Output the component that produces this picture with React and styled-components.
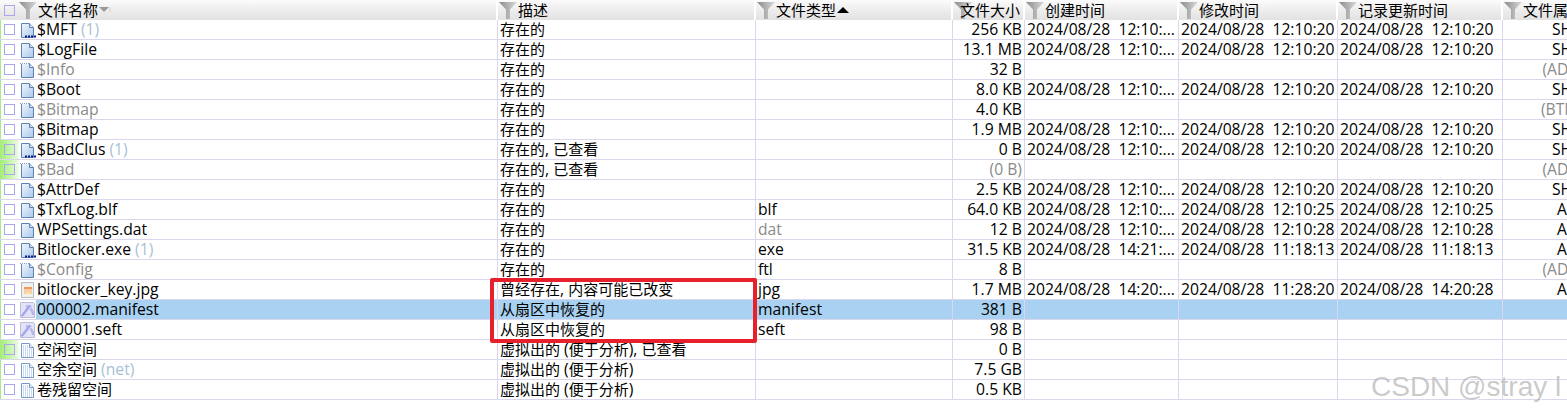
import React from 'react';
import styled, { createGlobalStyle } from 'styled-components';

const COLUMNS = '498px 258px 197px 72px 154px 159px 165px 118px';
const LINE = '#d9d6ee';
const FONT = `"Open Sans", "Noto Sans CJK SC", sans-serif`;

const GlobalStyle = createGlobalStyle`
  html, body {
    margin: 0;
    background: #fff;
    overflow: hidden;
  }
`;

const Page = styled.div`
  position: relative;
  width: 1567px;
  height: 415px;
  overflow: hidden;
  font-family: ${FONT};
  font-size: 15.7px;
  color: #000;
`;

const Table = styled.div`
  width: 1621px;
`;

const HeaderRow = styled.div`
  display: grid;
  grid-template-columns: ${COLUMNS};
  height: 20px;
`;

const HeaderCell = styled.div`
  display: flex;
  align-items: center;
  gap: 1px;
  height: 20px;
  padding-left: ${(p) => p.$inset ?? 1}px;
  box-sizing: border-box;
  border-right: 2px solid #fff;
  background: linear-gradient(#fbfbfb, #ececec 55%, #e2e2e2);
  white-space: nowrap;
`;

const HeaderLabel = styled.span`
  margin-left: ${(p) => (p.$overlap ? -13 : 0)}px;
`;

const Row = styled.div`
  display: grid;
  grid-template-columns: ${COLUMNS};
  height: 20px;
  box-sizing: border-box;
  border-bottom: 1px solid ${LINE};
`;

const Cell = styled.div`
  height: 19px;
  line-height: 19px;
  box-sizing: border-box;
  padding: 0 ${(p) => (p.$align === 'right' ? 2 : 1)}px 0 2px;
  border-right: 1px solid ${LINE};
  text-align: ${(p) => p.$align || 'left'};
  white-space: pre;
  color: ${(p) => (p.$grey ? '#8a8a8a' : '#000')};
  background: ${(p) => (p.$selected ? '#a8d1f2' : 'transparent')};
`;

const NameCell = styled.div`
  display: flex;
  align-items: center;
  height: 19px;
  border-right: 1px solid ${LINE};
`;

const Marker = styled.div`
  flex: none;
  display: flex;
  align-items: center;
  width: 20px;
  height: 19px;
  padding-left: 3px;
  box-sizing: border-box;
  border-left: 1px solid #a5ee7e;
  background: ${(p) =>
    p.$viewed ? 'linear-gradient(90deg, #a4ee7c, #e6fad9 85%, #fff)' : 'transparent'};
`;

const Check = styled.span`
  display: block;
  flex: none;
  width: 11px;
  height: 11px;
  margin-right: ${(p) => (p.$header ? 3 : 0)}px;
  box-sizing: border-box;
  border: 1px solid #aba6ee;
  background: ${(p) => (p.$viewed || p.$header ? 'transparent' : '#fff')};
`;

const IconSlot = styled.div`
  flex: none;
  display: flex;
  width: 16px;
  height: 16px;
`;

const Name = styled.div`
  flex: 1;
  height: 19px;
  line-height: 19px;
  padding-left: 1px;
  white-space: nowrap;
  color: ${(p) => (p.$grey ? '#8a8a8a' : '#000')};
  background: ${(p) => (p.$selected ? '#a8d1f2' : 'transparent')};
`;

const Count = styled.span`
  color: #a9bfd6;
`;

const Han = styled.span`
  font-size: 15px;
`;

const HighlightBox = styled.div`
  position: absolute;
  left: 490px;
  top: 278px;
  width: 267px;
  height: 65px;
  box-sizing: border-box;
  border: 4px solid #e8202c;
  border-radius: 2px;
  pointer-events: none;
`;

const Watermark = styled.div`
  position: absolute;
  left: 1371px;
  top: 371px;
  font-family: "Liberation Sans", sans-serif;
  font-size: 28px;
  line-height: 32px;
  white-space: nowrap;
  color: rgba(150, 150, 150, 0.5);
  text-shadow: 1px 1px 1px rgba(255, 255, 255, 0.8);
`;

// CJK runs sit a little smaller than the latin text around them
const Text = ({ children }) =>
  String(children)
    .split(/([\u4e00-\u9fff]+)/)
    .map((part, i) => (i % 2 ? <Han key={i}>{part}</Han> : part));

const FilterIcon = () => (
  <svg width="18" height="19" viewBox="0 0 18 19">
    <defs>
      <linearGradient id="funnel" x1="0" y1="0" x2="1" y2="0">
        <stop offset="0" stopColor="#8a8a8a" />
        <stop offset="1" stopColor="#dadada" />
      </linearGradient>
    </defs>
    <path d="M0 1h18l-7 7.5V18H7V8.5z" fill="url(#funnel)" />
  </svg>
);

const SortDown = () => (
  <svg width="12" height="8" viewBox="0 0 12 8">
    <path d="M0 1h10L5 6z" fill="#9a9a9a" />
    <path d="M11 1v5" stroke="#cfcfcf" />
  </svg>
);

const SortUp = () => (
  <svg width="12" height="8" viewBox="0 0 12 8">
    <path d="M0 7L6 1l6 6z" fill="#000" />
  </svg>
);

const FileShape = ({ id }) => (
  <>
    <defs>
      <linearGradient id={id} x1="0" y1="0" x2="1" y2="1">
        <stop offset="0" stopColor="#f2f7fd" />
        <stop offset="1" stopColor="#a9c8ec" />
      </linearGradient>
    </defs>
    <path d="M1.5 1.5h8l4 4v10h-12z" fill={`url(#${id})`} stroke="#5f82b0" />
    <path d="M9.5 1.5v4h4" fill="#cfe0f4" stroke="#5f82b0" />
  </>
);

const FileIcon = ({ kind }) => {
  if (kind === 'jpg') {
    return (
      <svg width="16" height="16" viewBox="0 0 16 16">
        <path d="M1.5 .5h12v15h-12z" fill="#f3f0ec" stroke="#b4bccb" />
        <rect x="4" y="5" width="8" height="7" fill="#f8cda8" />
        <path d="M4 5h8v2H4z" fill="#ee9a5c" />
        <path d="M5 12l3-3 3 3z" fill="#f7e0a0" />
      </svg>
    );
  }
  if (kind === 'recovered') {
    return (
      <svg width="16" height="16" viewBox="0 0 16 16">
        <path d="M.5 .5h13l1 1v14H.5z" fill="#e2e3f4" stroke="#bcbcdc" />
        <path d="M6 4c4 1 6.5 4 7.5 9" fill="none" stroke="#b5b5f0" strokeWidth="2.5" />
        <path d="M2 14.5L10.5 3.5" stroke="#a3a3ec" strokeWidth="3" />
        <path d="M3 15L11 5" stroke="#fff" strokeWidth=".8" />
      </svg>
    );
  }
  if (kind === 'free') {
    return (
      <svg width="16" height="16" viewBox="0 0 16 16">
        <path d="M1.5 1.5h8l4 4v10h-12z" fill="#fff" stroke="#7a9ac4" />
        <path d="M9.5 1.5v4h4" fill="#e3edf9" stroke="#7a9ac4" />
        <path d="M3 4h6M3 6h9M3 8h9M3 10h9M3 12h9M3 14h9" stroke="#8fb4ea" strokeDasharray="1 1" />
      </svg>
    );
  }
  if (kind === 'virtual') {
    return (
      <svg width="16" height="16" viewBox="0 0 16 16">
        <FileShape id="virtualFill" />
        <path d="M0 1.5h9" stroke="#fff" />
        <path d="M0 1.5h9" stroke="#7f9cc4" strokeDasharray="1 1" />
      </svg>
    );
  }
  if (kind === 'dots') {
    return (
      <svg width="16" height="16" viewBox="0 0 16 16">
        <FileShape id="dotsFill" />
        <path d="M5 14.5h11" stroke="#0a1e8c" strokeWidth="2" strokeDasharray="2 1" />
      </svg>
    );
  }
  return (
    <svg width="16" height="16" viewBox="0 0 16 16">
      <FileShape id="plainFill" />
    </svg>
  );
};

const HEADERS = [
  { label: '文件名称', inset: 4, check: true, sort: 'down' },
  { label: '描述' },
  { label: '文件类型', sort: 'up' },
  { label: '文件大小', overlap: true },
  { label: '创建时间' },
  { label: '修改时间' },
  { label: '记录更新时间' },
  { label: '文件属性' },
];

const D = '2024/08/28';
const stamp = (time) => `${D}  ${time}`;
const base = [stamp('12:10:...'), stamp('12:10:20'), stamp('12:10:20')];
const EXIST = '存在的';
const VIEWED = '存在的, 已查看';
const VIRTUAL = '虚拟出的 (便于分析)';

const ROWS = [
  { name: '$MFT', count: '(1)', icon: 'dots', desc: EXIST, size: '256 KB', times: base, attr: 'SH' },
  { name: '$LogFile', icon: 'plain', desc: EXIST, size: '13.1 MB', times: base, attr: 'SH' },
  { name: '$Info', grey: true, icon: 'virtual', desc: EXIST, size: '32 B', attr: '(ADS)' },
  { name: '$Boot', icon: 'plain', desc: EXIST, size: '8.0 KB', times: base, attr: 'SH' },
  { name: '$Bitmap', grey: true, icon: 'virtual', desc: EXIST, size: '4.0 KB', attr: '(BTM)' },
  { name: '$Bitmap', icon: 'plain', desc: EXIST, size: '1.9 MB', times: base, attr: 'SH' },
  { name: '$BadClus', count: '(1)', icon: 'dots', desc: VIEWED, viewed: true, size: '0 B', times: base, attr: 'SH' },
  { name: '$Bad', grey: true, icon: 'virtual', desc: VIEWED, viewed: true, size: '(0 B)', sizeGrey: true, attr: '(ADS)' },
  { name: '$AttrDef', icon: 'plain', desc: EXIST, size: '2.5 KB', times: base, attr: 'SH' },
  {
    name: '$TxfLog.blf', icon: 'plain', desc: EXIST, type: 'blf', size: '64.0 KB', attr: 'A',
    times: [stamp('12:10:...'), stamp('12:10:25'), stamp('12:10:25')],
  },
  {
    name: 'WPSettings.dat', icon: 'plain', desc: EXIST, type: 'dat', typeGrey: true, size: '12 B', attr: 'A',
    times: [stamp('12:10:...'), stamp('12:10:28'), stamp('12:10:28')],
  },
  {
    name: 'Bitlocker.exe', count: '(1)', icon: 'dots', desc: EXIST, type: 'exe', size: '31.5 KB', attr: 'A',
    times: [stamp('14:21:...'), stamp('11:18:13'), stamp('11:18:13')],
  },
  { name: '$Config', grey: true, icon: 'virtual', desc: EXIST, type: 'ftl', size: '8 B', attr: '(ADS)' },
  {
    name: 'bitlocker_key.jpg', icon: 'jpg', desc: '曾经存在, 内容可能已改变', type: 'jpg', size: '1.7 MB', attr: 'A',
    times: [stamp('14:20:...'), stamp('11:28:20'), stamp('14:20:28')],
  },
  { name: '000002.manifest', icon: 'recovered', selected: true, desc: '从扇区中恢复的', type: 'manifest', size: '381 B' },
  { name: '000001.seft', icon: 'recovered', desc: '从扇区中恢复的', type: 'seft', size: '98 B' },
  { name: '空闲空间', icon: 'free', viewed: true, desc: '虚拟出的 (便于分析), 已查看', size: '0 B' },
  { name: '空余空间', count: '(net)', icon: 'free', desc: VIRTUAL, size: '7.5 GB' },
  { name: '卷残留空间', icon: 'free', desc: VIRTUAL, size: '0.5 KB' },
];

const App = () => (
  <Page>
    <GlobalStyle />
    <Table>
      <HeaderRow>
        {HEADERS.map((h) => (
          <HeaderCell key={h.label} $inset={h.inset}>
            {h.check && <Check $header />}
            <FilterIcon />
            <HeaderLabel $overlap={h.overlap}>
              <Text>{h.label}</Text>
            </HeaderLabel>
            {h.sort === 'down' && <SortDown />}
            {h.sort === 'up' && <SortUp />}
          </HeaderCell>
        ))}
      </HeaderRow>
      {ROWS.map((r, i) => {
        const times = r.times || ['', '', ''];
        return (
          <Row key={i}>
            <NameCell>
              <Marker $viewed={r.viewed}>
                <Check $viewed={r.viewed} />
              </Marker>
              <IconSlot>
                <FileIcon kind={r.icon} />
              </IconSlot>
              <Name $grey={r.grey} $selected={r.selected}>
                <Text>{r.name}</Text>
                {r.count && <Count> {r.count}</Count>}
              </Name>
            </NameCell>
            <Cell $selected={r.selected}>
              <Text>{r.desc}</Text>
            </Cell>
            <Cell $selected={r.selected} $grey={r.typeGrey}>{r.type}</Cell>
            <Cell $selected={r.selected} $align="right" $grey={r.sizeGrey}>{r.size}</Cell>
            {times.map((t, j) => (
              <Cell key={j} $selected={r.selected}>{t}</Cell>
            ))}
            <Cell $selected={r.selected} $align="center" $grey={r.attr && r.attr[0] === '('}>{r.attr}</Cell>
          </Row>
        );
      })}
    </Table>
    <HighlightBox />
    <Watermark>CSDN @stray l</Watermark>
  </Page>
);

export default App;
